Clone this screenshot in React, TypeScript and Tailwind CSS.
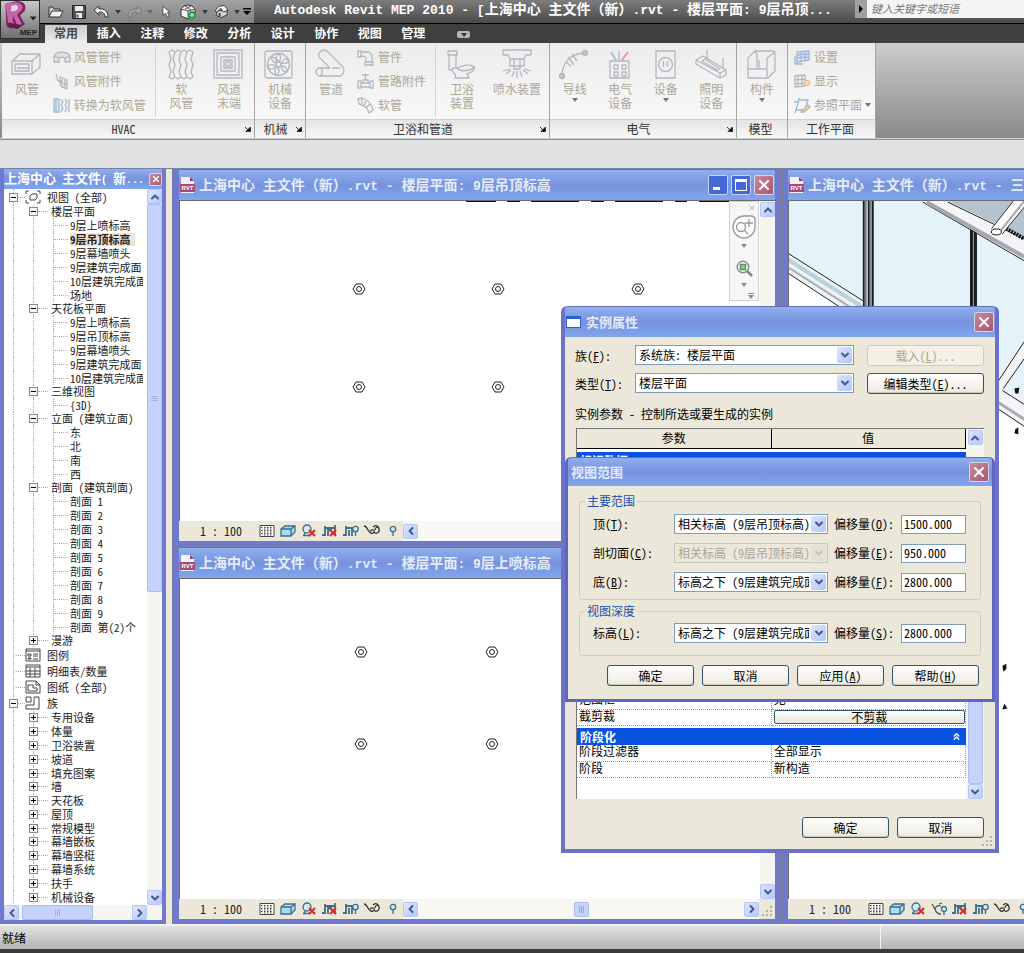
import type { ReactNode } from "react";
import { ChevronDown, ChevronLeft, ChevronRight, ChevronUp, ChevronsUp, X } from "lucide-react";

const FONT = "font-['Noto_Sans_Mono_CJK_SC','Noto_Sans_CJK_SC',sans-serif]";
const TITLE_BG = "bg-linear-to-b from-[#8fb0ee] via-[#7892de] to-[#7fa6ee]";

/* ---------- small shared pieces ---------- */

// Latin runs use the fixed-pitch face, Chinese keeps the UI font
function Mixed({ text, latin }: { text: string; latin: string }) {
  return (
    <>
      {text.split(/([\x20-\x7e]+)/).map((part, i) =>
        i % 2 ? (
          <span key={i} className={`whitespace-pre font-['Liberation_Mono',monospace] ${latin}`}>{part}</span>
        ) : (
          part
        )
      )}
    </>
  );
}

function Caret({ className = "" }: { className?: string }) {
  return (
    <svg viewBox="0 0 6 4" className={`h-[4px] w-[6px] shrink-0 ${className}`}>
      <path d="M0 0h6L3 4z" fill="currentColor" />
    </svg>
  );
}

function ScrollButton({ dir }: { dir: "up" | "down" | "left" | "right" }) {
  const Icon = { up: ChevronUp, down: ChevronDown, left: ChevronLeft, right: ChevronRight }[dir];
  return (
    <button
      type="button"
      aria-label={dir}
      className="flex size-[15px] shrink-0 items-center justify-center rounded-xs border border-[#b4c6f4] bg-linear-to-br from-[#dde6ff] to-[#b6c9fa] text-[#45598c]"
    >
      <Icon size={12} strokeWidth={4} />
    </button>
  );
}

function CloseButton({ small = false }: { small?: boolean }) {
  return (
    <button
      type="button"
      aria-label="关闭"
      className={`flex shrink-0 items-center justify-center rounded-xs border border-[#d9d4ea] bg-linear-to-br from-[#c58a9d] to-[#a9576c] text-white ${small ? "size-[13px]" : "size-[20px]"}`}
    >
      <X size={small ? 10 : 16} strokeWidth={3} />
    </button>
  );
}

function PushButton({ children, className = "w-[87px]", disabled = false }: { children: ReactNode; className?: string; disabled?: boolean }) {
  return (
    <button
      type="button"
      disabled={disabled}
      className={`h-[21px] rounded-[3px] border text-center text-xs leading-[18px] ${
        disabled ? "border-[#cfcdbf] bg-[#f3f1e6] text-[#a8a698]" : "border-[#33566f] bg-linear-to-b from-white to-[#ebeae0] text-black shadow-[inset_0_-1px_1px_#c9c6b8]"
      } ${className}`}
    >
      {children}
    </button>
  );
}

function Combo({ id, value, className, disabled = false }: { id: string; value: string; className: string; disabled?: boolean }) {
  return (
    <div className={`relative h-[20px] ${className}`}>
      <select
        id={id}
        disabled={disabled}
        className={`block size-full appearance-none overflow-hidden border pl-[3px] pr-[18px] text-xs leading-[18px] opacity-100 ${
          disabled ? "border-[#c9c7ba] bg-[#ebe8d9] text-[#a8a698]" : "border-[#7f9db9] bg-white text-black"
        }`}
      >
        <option>{value}</option>
      </select>
      <span
        className={`pointer-events-none absolute right-[2px] top-[2px] flex h-[16px] w-[15px] items-center justify-center rounded-xs ${
          disabled ? "bg-[#e4e1d3] text-[#c6c4b6]" : "bg-linear-to-br from-[#dbe5ff] to-[#b2c6f8] text-[#45598c]"
        }`}
      >
        <ChevronDown size={12} strokeWidth={4} />
      </span>
    </div>
  );
}

function Key({ text, k }: { text: string; k: string }) {
  return (
    <>
      {text}(<u>{k}</u>)
    </>
  );
}

/* ---------- quick access bar, title and tabs ---------- */

function RevitLogo() {
  return (
    <div className="relative h-[39px] w-[40px] shrink-0 border border-[#2b2b2b] bg-linear-to-b from-[#c9c9c9] to-[#6f6f6f]">
      <svg viewBox="0 0 38 38" className="size-full">
        <path d="M4 3l11-3c8 0 11 4 9 10l-5 5 5 9-8 5-5-9v9l-6-3z" fill="#7b2561" />
        <path d="M4 3l10-2c6 0 9 4 7 8l-5 5 5 10-5 1-4-10-1 12-4-3z" fill="#c465a6" />
        <path d="M10 5l4-1c4 0 4 5 0 6l-4 1z" fill="#e9d6e6" />
        <path d="M7 22l14 3-5 4-9-3z" fill="#5d1d4b" />
        <path d="M29 16h7l-3.500 4z" fill="#222" />
      </svg>
      <span className="absolute bottom-0 right-[2px] font-['Liberation_Sans',sans-serif] text-[8px] font-bold leading-[10px] text-[#222]">MEP</span>
    </div>
  );
}

function QuickAccess() {
  const btn = "flex h-[20px] items-center justify-center";
  return (
    <div className="flex h-[23px] w-[214px] shrink-0 items-center bg-linear-to-b from-[#a2a2a2] to-[#828282] pl-[6px] text-[#3a3a3a]">
      <button type="button" aria-label="打开" className={`${btn} w-[20px]`}>
        <svg viewBox="0 0 16 14" className="h-[14px] w-[16px]">
          <path d="M1 12V2h4l1 2h6v2" fill="#c9ced4" stroke="#333" />
          <path d="M1 12l3-6h11l-3 6z" fill="#eef0f2" stroke="#333" />
        </svg>
      </button>
      <button type="button" aria-label="保存" className={`${btn} w-[25px]`}>
        <svg viewBox="0 0 14 14" className="size-[14px]">
          <path d="M.5.5h13v13H.5z" fill="#46525e" stroke="#222" />
          <path d="M3 1h8v5H3zM4 8h6v5H4z" fill="#e9edf0" />
          <path d="M4.500 9.500h2v3h-2z" fill="#46525e" />
        </svg>
      </button>
      <button type="button" aria-label="放弃" className={`${btn} w-[20px]`}>
        <svg viewBox="0 0 16 13" className="h-[13px] w-[16px]">
          <path d="M1 5l5-4v3c6-1 9 3 9 8h-3c0-4-2-5-6-5v3z" fill="#f2f4f6" stroke="#333" />
        </svg>
      </button>
      <Caret className="mx-[4px]" />
      <button type="button" aria-label="重做" className={`${btn} w-[20px]`}>
        <svg viewBox="0 0 16 13" className="h-[13px] w-[16px]">
          <path d="M15 5l-5-4v3C4 3 1 7 1 12h3c0-4 2-5 6-5v3z" fill="#a3a3a3" stroke="#777" />
        </svg>
      </button>
      <Caret className="mx-[2px] text-[#666]" />
      <button type="button" aria-label="选择" className={`${btn} w-[22px]`}>
        <svg viewBox="0 0 10 14" className="h-[13px] w-[9px]">
          <path d="M1 1v10l3-2 2 4 2-1-2-4h3z" fill="#fff" stroke="#444" />
        </svg>
      </button>
      <button type="button" aria-label="三维视图" className={`${btn} w-[22px]`}>
        <svg viewBox="0 0 16 16" className="size-[16px]">
          <path d="M1 5l3-3 4-1 4 1 3 3v6l-7 4-7-3z" fill="#eef3f1" stroke="#333" />
          <path d="M1 5l7 2 7-2M8 7v7M5 2l6 4M11 2L5 5" fill="none" stroke="#555" />
          <circle cx="12" cy="11" r="4" fill="#2f9e4e" />
          <path d="M10 11h4M12 9v4" stroke="#d6f5dc" />
        </svg>
      </button>
      <Caret className="mx-[3px]" />
      <button type="button" aria-label="默认视图" className={`${btn} w-[20px]`}>
        <svg viewBox="0 0 16 15" className="h-[15px] w-[15px]">
          <path d="M3 7v5l5 2 6-3V6z" fill="#cdd3da" stroke="#333" />
          <path d="M1 7l4-5 6-1 4 5-5 2-3-4-4 4z" fill="#f4f6f8" stroke="#333" />
          <path d="M5 9h2v4l-2-1z" fill="#444" />
        </svg>
      </button>
      <Caret className="mx-[3px]" />
      <svg viewBox="0 0 8 7" className="h-[7px] w-[8px] shrink-0">
        <path d="M0 0h8v1.500H0zM0 3h8L4 7z" fill="#000" />
      </svg>
    </div>
  );
}

const tabs = ["插入", "注释", "修改", "分析", "设计", "协作", "视图", "管理"];

function Header() {
  return (
    <header className="flex h-[43px] shrink-0 bg-[#3f3f3f]">
      <RevitLogo />
      <div className="min-w-0 flex-1">
        <div className="flex h-[24px] items-start border-b border-black bg-linear-to-b from-[#7d7d7d] to-[#4a4a4a]">
          <QuickAccess />
          <h1 className="min-w-0 flex-1 whitespace-nowrap pl-[20px] text-[14px] font-bold leading-[16px] text-white">
            <Mixed text="Autodesk Revit MEP 2010 - [上海中心 主文件（新）.rvt - 楼层平面: 9层吊顶..." latin="text-[13px]" />
          </h1>
          <div className="flex h-[18px] w-[169px] shrink-0">
            <button type="button" aria-label="展开搜索" className="flex w-[13px] items-center justify-center bg-[#a0a0a0]">
              <svg viewBox="0 0 4 8" className="h-[8px] w-[4px]">
                <path d="M0 0l4 4-4 4z" />
              </svg>
            </button>
            <input
              aria-label="搜索"
              placeholder="键入关键字或短语"
              className="w-full min-w-0 bg-[#f4f4f4] pb-[2px] pl-[4px] text-[11px] italic leading-[16px] placeholder:text-[#777]"
            />
          </div>
        </div>
        <nav className="flex h-[19px] items-end text-xs font-bold text-white">
          <button type="button" className="ml-[5px] h-[18px] w-[42px] bg-linear-to-b from-[#c9c9c9] to-[#efefef] pb-[3px] leading-[14px] text-[#4a4a4a]">常用</button>
          <div className="grid h-[18px] w-[348px] grid-cols-8">
            {tabs.map((t) => (
              <button key={t} type="button" className="pb-[3px] leading-[14px]">{t}</button>
            ))}
          </div>
          <button type="button" aria-label="最小化功能区" className="mb-[5px] ml-[22px] flex h-[7px] w-[13px] items-center justify-center rounded-xs bg-[#b5b5b5] text-[#333]">
            <Caret />
          </button>
        </nav>
      </div>
    </header>
  );
}

/* ---------- ribbon ---------- */

const big: Record<string, ReactNode> = {
  duct: <path d="M1 12l8-7h20v13l-8 7H1zM1 12h20v13M21 12l8-7M4 15h14v7H4zM6 19h12" />,
  flexDuct: <path d="M4 3l3-2 3 2 3-2 3 2 3-2 3 2 3-2 3 2-2 7 2 6-2 7 2 5-3 2-3-2-3 2-3-2-3 2-3-2-3 2-3-2 2-5-2-7 2-6zM10 3l-2 7 2 6-2 7 2 5M16 3l-2 7 2 6-2 7 2 5M22 3l-2 7 2 6-2 7 2 5" />,
  terminal: <path d="M1 1h28v28H1zM4 4h22v22H4zM8 8h14v14H8zM11 11h8v8h-8zM13 13h4v4h-4z" />,
  fan: (
    <>
      <rect x="1" y="2" width="27" height="27" rx="2" />
      <circle cx="14.500" cy="15.500" r="11" />
      <circle cx="14.500" cy="15.500" r="2.500" />
      <path d="M15 13c-4-3-3-7 0-8 2 2 2 5 0 8zM17 14c2-4 6-5 8-3-1 3-4 4-8 3zM17 17c5 0 7 3 6 6-3 0-5-2-6-6zM14 18c2 4 1 7-2 8-2-3-1-6 2-8zM12 17c-3 4-6 4-8 1 1-3 4-3 8-1zM12 14c-4-1-5-4-4-6 3 0 5 2 4 6z" />
    </>
  ),
  pipe: <path d="M5 3c3-3 6-2 8 0l15 15c2 3 0 9-3 9H5c-5 0-5-8 0-8h10L5 9C3 7 3 5 5 3zM5 19c3 1 3 7 0 8M25 19l-8 0" />,
  toilet: <path d="M2 2h9v4H2zM3 6v15h4M10 6v12M7 19h5c4-3 12-4 17-1-1 3-4 6-8 7l2 4H9c1-2 1-3-1-5-2-1-2-4-1-5zM10 18c4 5 12 5 19 0" />,
  sprinkler: <path d="M2 1h28v5h-5l-2 4H9L7 6H2zM9 10v7h4v-6M23 10v7h-4v-6M13 17h6v3h-6zM10 21l-5 4M13 22l-2 6M16 22v7M19 22l2 6M22 21l5 4M9 20l-7 2M23 20l7 2" />,
  wire: (
    <>
      <circle cx="26" cy="4" r="2.500" fill="#c4c7cc" />
      <circle cx="3" cy="27" r="2.500" fill="#c4c7cc" />
      <path d="M24 4C12 5 4 13 3 25M9 8l6 8M13 5l5 7M7 13l5 4" />
    </>
  ),
  panel: (
    <>
      <path d="M6 12h19v17H6z" />
      <path d="M10 16h4v4h-4zM18 16h4v4h-4zM10 23h4v4h-4zM18 23h4v4h-4zM15 2v9" />
      <path d="M7 3l5 8" stroke="#9fc4dc" strokeWidth="2" />
      <path d="M24 3l-6 8" stroke="#e39a97" strokeWidth="2" />
    </>
  ),
  outlet: (
    <>
      <path d="M6 2h19v27H6z" />
      <circle cx="15.500" cy="15.500" r="7" />
      <path d="M13.500 12v6M17.500 12v6" />
    </>
  ),
  light: <path d="M1 11l7-4 23 14v5l-6 3L1 15zM1 11l24 13 6-3M25 24v5M12 1v9M28 9v10M7 12l3-2 15 10-3 1z" />,
  component: <path d="M2 10q0-2 2-3l5-5h18q2 0 2 2v18l-7 7H2zM29 3l-8 6v9q0 2-2 2H2M11 20V6q0-3-3-3M21 20v8M13 20v-9" />,
};

const small: Record<string, ReactNode> = {
  ductFitting: <path d="M1 7c3-5 13-5 16 0v6h-5V9c-2-1-4-1-6 0v4H1zM1 7l5 2M17 7l-5 2" fill="#e0e2e6" />,
  ductAccessory: <path d="M3 1l2 7h4M7 4l7 3v9l-7-4zM9 6v9M12 7v9M7 9l7 3" />,
  convert: <path d="M1 2h5v13H1zM3 2v13M8 2l2 3-2 3 2 3-2 4M12 2l2 3-2 3 2 3-2 4M16 2v13" stroke="#9fbbd4" fill="#dbe8f2" />,
  elbow: <path d="M1 2h3v6H1zM4 3h6c4 0 5 3 5 6v4h-6v-3c0-2-1-3-5-3M8 13h8v3H8z" />,
  valve: <path d="M1 8h3v7H1zM13 8h3v7h-3zM4 10h9v4H4zM6 10V7h5v3M8.500 7V2M5 2h7" />,
  flexPipe: <path d="M1 2l4-1c6 2 10 7 11 12l-4 3C11 10 6 8 2 7zM5 1v6M9 4L7 9M13 7l-4 4" />,
  setGrid: <path d="M4 3l12-1v9L4 13zM4 6l12-1M4 9l12-1M8 3v9M12 3v9M2 7v8h8" stroke="#9fb8d6" fill="#d5e4f4" />,
  showGrid: (
    <>
      <path d="M2 3l10-1v11L2 14zM2 7l10-1M2 11l10-1M5 3v11M9 2v11" />
      <circle cx="14" cy="10" r="2.500" fill="#f5e2b4" stroke="#dcc68e" />
    </>
  ),
  refPlane: (
    <>
      <path d="M2 16L6 3h9l-3 10H3M1 5h5M6 3V1" stroke="#92bbdc" />
      <path d="M8 15l7-7 2 2-6 5z" fill="#efe3c4" stroke="#c0b48f" />
    </>
  ),
};

const iconProps = { fill: "none", stroke: "#b3b7be", strokeWidth: 1.3, strokeLinejoin: "round" as const };

function BigButton({ icon, lines, width = "w-[46px]", caret = false }: { icon: string; lines: string[]; width?: string; caret?: boolean }) {
  return (
    <button type="button" className={`flex flex-col items-center pt-[6px] ${width}`}>
      <svg viewBox="0 0 32 31" className="h-[31px] w-[32px]" {...iconProps}>{big[icon]}</svg>
      <span className="mt-[2px] text-xs leading-[14px]">
        {lines.map((l) => (
          <span key={l} className="block">{l}</span>
        ))}
      </span>
      {caret && <Caret className="mt-[2px] text-[#777]" />}
    </button>
  );
}

function SmallColumn({ items, className = "" }: { items: [string, string, boolean?][]; className?: string }) {
  return (
    <div className={`flex flex-col gap-[6px] pt-[5px] ${className}`}>
      {items.map(([icon, label, caret]) => (
        <button key={label} type="button" className="flex h-[18px] items-center gap-[3px] whitespace-nowrap text-xs leading-[16px]">
          <svg viewBox="0 0 18 17" className="h-[17px] w-[18px] shrink-0" {...iconProps}>{small[icon]}</svg>
          {label}
          {caret && <Caret className="text-[#777]" />}
        </button>
      ))}
    </div>
  );
}

function Panel({ title, width, launcher = false, children }: { title: string; width: string; launcher?: boolean; children: ReactNode }) {
  return (
    <section className={`flex shrink-0 flex-col border-r border-[#a5a5a5] bg-linear-to-b from-[#ececec] to-[#fbfbfb] ${width}`}>
      <div className="flex h-[76px] px-[2px] text-[#aba89b]">{children}</div>
      <div className="flex h-[19px] items-center border-t border-[#d2d2d2] bg-linear-to-b from-[#e4e4e4] to-[#f8f8f8] pr-[3px]">
        <h2 className="flex-1 text-center text-xs leading-[16px] text-[#333]">{title}</h2>
        {launcher && (
          <svg viewBox="0 0 6 6" className="size-[6px]">
            <path d="M0 1l3 3M5.500 1v4.500H1z" stroke="#333" />
          </svg>
        )}
      </div>
    </section>
  );
}

function Divider() {
  return <div className="my-[2px] w-px bg-[#d3d3d3]" />;
}

function Ribbon() {
  return (
    <div className="shrink-0 border-b border-[#8f8f8f] bg-[#cfcfcf] pb-[1px]">
      <div className="flex h-[95px] bg-linear-to-b from-[#cdcdcd] to-[#8a8a8a] pl-[2px]">
        <Panel title="HVAC" width="w-[253px]" launcher>
          <BigButton icon="duct" lines={["风管"]} />
          <SmallColumn
            className="w-[106px] pl-[3px]"
            items={[["ductFitting", "风管管件"], ["ductAccessory", "风管附件"], ["convert", "转换为软风管"]]}
          />
          <Divider />
          <BigButton icon="flexDuct" lines={["软", "风管"]} width="w-[50px]" />
          <BigButton icon="terminal" lines={["风道", "末端"]} />
        </Panel>
        <Panel title="机械" width="w-[51px]" launcher>
          <BigButton icon="fan" lines={["机械", "设备"]} />
        </Panel>
        <Panel title="卫浴和管道" width="w-[244px]" launcher>
          <BigButton icon="pipe" lines={["管道"]} />
          <SmallColumn className="w-[81px] pl-[3px]" items={[["elbow", "管件"], ["valve", "管路附件"], ["flexPipe", "软管"]]} />
          <Divider />
          <BigButton icon="toilet" lines={["卫浴", "装置"]} width="w-[52px]" />
          <BigButton icon="sprinkler" lines={["喷水装置"]} width="w-[58px]" />
        </Panel>
        <Panel title="电气" width="w-[187px]" launcher>
          <BigButton icon="wire" lines={["导线"]} caret />
          <BigButton icon="panel" lines={["电气", "设备"]} />
          <BigButton icon="outlet" lines={["设备"]} caret />
          <BigButton icon="light" lines={["照明", "设备"]} />
        </Panel>
        <Panel title="模型" width="w-[51px]">
          <BigButton icon="component" lines={["构件"]} caret />
        </Panel>
        <Panel title="工作平面" width="w-[88px]">
          <SmallColumn className="pl-[3px]" items={[["setGrid", "设置"], ["showGrid", "显示"], ["refPlane", "参照平面", true]]} />
        </Panel>
      </div>
    </div>
  );
}

/* ---------- project browser ---------- */

type Branch = { name: string; open: boolean; children: string[] };

const views: Branch[] = [
  { name: "楼层平面", open: true, children: ["9层上喷标高", "9层吊顶标高", "9层幕墙喷头", "9层建筑完成面", "10层建筑完成面", "场地"] },
  { name: "天花板平面", open: true, children: ["9层上喷标高", "9层吊顶标高", "9层幕墙喷头", "9层建筑完成面", "10层建筑完成面"] },
  { name: "三维视图", open: true, children: ["{3D}"] },
  { name: "立面 (建筑立面)", open: true, children: ["东", "北", "南", "西"] },
  {
    name: "剖面 (建筑剖面)",
    open: true,
    children: ["剖面 1", "剖面 2", "剖面 3", "剖面 4", "剖面 5", "剖面 6", "剖面 7", "剖面 8", "剖面 9", "剖面 第(2)个"],
  },
  { name: "漫游", open: false, children: [] },
];

const families = [
  "专用设备", "体量", "卫浴装置", "坡道", "填充图案", "墙", "天花板",
  "屋顶", "常规模型", "幕墙嵌板", "幕墙竖梃", "幕墙系统", "扶手", "机械设备",
];

const rootIcons: Record<string, ReactNode> = {
  views: <path d="M4 1H1v3M12 1h3v3M4 13H1v-3M12 13h3v-3M5 6l2-2h5v4l-2 2H5z" />,
  legend: <path d="M1 1h14v12H1zM1 3h14M3 6h3v2H3zM8 6h5M8 8h5M3 10h3v1H3zM8 11h5" />,
  schedule: <path d="M1 1h14v12H1zM1 3h14M1 7h14M1 10h14M5 4v9M10 4v9" />,
  sheet: <path d="M1 1h10l4 4v8H1zM11 1v4h4M3 11V5h5v3h4v3z" />,
  family: <path d="M1 1h5v5H1zM9 1h5v12H1V9h8z" />,
};

function Toggle({ open }: { open: boolean }) {
  return (
    <span className="relative -ml-[5px] flex size-[9px] shrink-0 items-center justify-center self-center border border-[#8a8a8a] bg-[#f6f6f4]">
      <span className="h-px w-[5px] bg-black" />
      {!open && <span className="absolute h-[5px] w-px bg-black" />}
    </span>
  );
}

function Guide() {
  return <span className="w-[20px] shrink-0 self-stretch border-l border-dotted border-[#b0b0b0]" />;
}

function RootRow({ icon, name, open }: { icon: string; name: string; open?: boolean }) {
  return (
    <div className="flex h-[16px] items-center">
      <span className="flex w-[12px] shrink-0 items-center self-stretch border-l border-dotted border-[#b0b0b0]">
        {open ? <Toggle open /> : null}
        <span className="flex-1 border-t border-dotted border-[#b0b0b0]" />
      </span>
      <svg viewBox="0 0 16 14" className="mr-[6px] h-[14px] w-[16px] shrink-0" fill="none" stroke="#444">{rootIcons[icon]}</svg>
      {name}
    </div>
  );
}

function BranchRow({ name, open, className = "" }: { name: string; open: boolean; className?: string }) {
  return (
    <div className={`flex items-center ${className}`}>
      <Guide />
      <span className="flex w-[18px] shrink-0 items-center self-stretch border-l border-dotted border-[#b0b0b0]">
        <Toggle open={open} />
        <span className="w-[10px] border-t border-dotted border-[#b0b0b0]" />
      </span>
      {name}
    </div>
  );
}

function ProjectBrowser() {
  return (
    <aside className="flex w-[166px] shrink-0 flex-col border-x-4 border-b-4 border-[#7079ce] bg-white">
      <div className={`flex h-[20px] shrink-0 items-center ${TITLE_BG}`}>
        <h2 className="min-w-0 flex-1 whitespace-nowrap text-[13px] font-bold leading-[20px] text-white">
          <Mixed text="上海中心 主文件( 新..." latin="text-[10px]" />
        </h2>
        <CloseButton small />
      </div>
      <div className="flex min-h-0 flex-1">
        <div className="mr-[4px] min-w-0 flex-1 overflow-hidden whitespace-pre pl-[9px] text-[11px] leading-[13px] text-[#222]">
          <RootRow icon="views" name="视图 (全部)" open />
          {views.map((v) => (
            <div key={v.name}>
              <BranchRow name={v.name} open={v.open} className="h-[13px]" />
              {v.children.map((c) => (
                <div key={c} className="flex h-[14px] items-center">
                  <Guide />
                  <Guide />
                  <span className="flex w-[17px] shrink-0 items-center self-stretch border-l border-dotted border-[#b0b0b0]">
                    <span className="w-[14px] border-t border-dotted border-[#b0b0b0]" />
                  </span>
                  <span className={v.name === "楼层平面" && c === "9层吊顶标高" ? "bg-[#ece5d6] pr-[4px] font-bold" : ""}>{c}</span>
                </div>
              ))}
            </div>
          ))}
          <RootRow icon="legend" name="图例" />
          <RootRow icon="schedule" name="明细表/数量" />
          <RootRow icon="sheet" name="图纸 (全部)" />
          <RootRow icon="family" name="族" open />
          <div className="grid h-[193px] auto-rows-fr">
            {families.map((f) => (
              <BranchRow key={f} name={f} open={false} />
            ))}
          </div>
        </div>
        <div className="flex w-[15px] shrink-0 flex-col bg-[#f6f5f0]">
          <ScrollButton dir="up" />
          <div className="flex h-[388px] flex-col items-center justify-center gap-px rounded-xs border border-[#a9bdf0] bg-[#c5d4fc]">
            <span className="h-px w-[7px] bg-[#9db3ea]" />
            <span className="h-px w-[7px] bg-[#9db3ea]" />
            <span className="h-px w-[7px] bg-[#9db3ea]" />
          </div>
          <div className="flex-1" />
          <ScrollButton dir="down" />
        </div>
      </div>
      <div className="flex h-[15px] shrink-0 bg-[#f6f5f0] pr-[15px]">
        <ScrollButton dir="left" />
        <div className="ml-[3px] flex w-[71px] items-center justify-center gap-px rounded-xs border border-[#a9bdf0] bg-[#c5d4fc]">
          <span className="h-[7px] w-px bg-[#9db3ea]" />
          <span className="h-[7px] w-px bg-[#9db3ea]" />
          <span className="h-[7px] w-px bg-[#9db3ea]" />
        </div>
        <div className="flex-1" />
        <ScrollButton dir="right" />
      </div>
    </aside>
  );
}

/* ---------- drawing windows ---------- */

function RvtIcon() {
  return (
    <span className="relative h-[16px] w-[15px] shrink-0">
      <svg viewBox="0 0 15 16" className="size-full">
        <path d="M1 0h9l4 4v12H1z" fill="#f6f1f6" />
        <path d="M10 0l4 4h-4z" fill="#8f3b7b" />
        <path d="M0 7h15v8H0z" fill="#a84a78" />
      </svg>
      <span className="absolute inset-x-0 bottom-[1px] text-center font-['Liberation_Sans',sans-serif] text-[6px] font-bold leading-[8px] text-white">RVT</span>
    </span>
  );
}

const red = { stroke: "#d0322b", strokeWidth: 2.2 };

function ViewBar({ render = false, children }: { render?: boolean; children?: ReactNode }) {
  const cell = "flex w-[21px] shrink-0 justify-center";
  const svg = { viewBox: "0 0 16 14", className: "h-[14px] w-[16px]", fill: "none", stroke: "#3f6d8e", strokeWidth: 1.3 };
  return (
    <div className="flex h-[20px] shrink-0 items-center bg-[#ebe8d9]">
      <span className="w-[77px] shrink-0 whitespace-pre pl-[21px] text-xs leading-[16px] text-[#222]">1 : 100</span>
      <button type="button" aria-label="详细程度" className={cell}>
        <svg {...svg} stroke="#444" strokeWidth="1">
          <path d="M1 1.500h14v11H1z" fill="#fff" />
          <path d="M2 3.500h12M2 6.500h12M2 9.500h12" strokeDasharray="1.500 1.500" />
          <path d="M3 5h11M3 8h11M3 11h11" strokeDasharray="1.500 1.500" strokeDashoffset="1" />
        </svg>
      </button>
      <button type="button" aria-label="模型图形样式" className={cell}>
        <svg {...svg}>
          <path d="M1 5l4-3h10v6l-4 4H1z" fill="#a9dcf2" />
          <path d="M1 5h10v7M11 5l4-3" />
        </svg>
      </button>
      <button type="button" aria-label="阴影" className={cell}>
        <svg {...svg}>
          <circle cx="6" cy="5" r="4" fill="#d7eef8" />
          <path d="M2 11.500h7M4 9l-1 2" />
          <path d="M8 6l6 6M14 6l-6 6" {...red} />
        </svg>
      </button>
      {render && (
        <button type="button" aria-label="渲染" className={cell}>
          <svg {...svg}>
            <path d="M1 2l3 5c1 4 3 5 6 5M4 7c1-3 3-4 6-3M8 2l3-1" stroke="#555" />
            <circle cx="13" cy="7" r="2.500" fill="#d7eef8" />
            <path d="M13 10v3" />
          </svg>
        </button>
      )}
      <button type="button" aria-label="裁剪视图" className={cell}>
        <svg {...svg}>
          <path d="M0 11h3V4h10v8M3 4V2M6 12V6h4M13 4V1" strokeWidth="1.800" />
          <path d="M8 6l6 6M14 6l-6 6" {...red} />
        </svg>
      </button>
      <button type="button" aria-label="显示裁剪区域" className={cell}>
        <svg {...svg}>
          <path d="M0 11h3V4h6v8M3 4V2M6 12V6" strokeWidth="1.800" />
          <circle cx="12.500" cy="5" r="2.700" fill="#d7eef8" />
          <path d="M12.500 8v4" />
        </svg>
      </button>
      <button type="button" aria-label="临时隐藏/隔离" className={cell}>
        <svg {...svg} stroke="#333">
          <path d="M0 2c2 0 3 2 4 4s4 5 6 2c1-2-2-3-4-1M10 8c2 3 6 0 5-3s-4-2-4 1M9 3c2-2 4-2 6 1" />
        </svg>
      </button>
      <button type="button" aria-label="显示隐藏的图元" className={cell}>
        <svg {...svg}>
          <circle cx="8" cy="5" r="2.700" fill="#c9eaf8" />
          <path d="M8 8v4" />
        </svg>
      </button>
      {children}
    </div>
  );
}

function Hexes({ points }: { points: [number, number][] }) {
  return (
    <>
      {points.map(([x, y]) => (
        <g key={`${x}-${y}`} transform={`translate(${x} ${y})`} fill="none" stroke="#222">
          <path d="M-6 0l3-5h6l3 5-3 5h-6z" />
          <circle r="2.500" />
        </g>
      ))}
    </>
  );
}

function ViewWindow({ title, active = false, children, className = "" }: { title: string; active?: boolean; children: ReactNode; className?: string }) {
  return (
    <section className={`flex min-h-0 flex-col rounded-t-md border-x-[5px] border-b-[5px] border-[#7079ce] bg-[#7079ce] ${className}`}>
      <div className={`flex h-[31px] shrink-0 items-center border-t border-[#666fb8] pl-[1px] pr-[1px] ${TITLE_BG}`}>
        <RvtIcon />
        <h2 className="ml-[4px] min-w-0 flex-1 overflow-hidden whitespace-nowrap text-[14px] font-bold leading-[20px] text-[#e4ecfc]">
          <Mixed text={title} latin="text-[13px]" />
        </h2>
        {active && (
          <div className="flex gap-[3px]">
            <button type="button" aria-label="最小化" className="flex size-[20px] items-end rounded-xs border border-[#c5d2f5] bg-[#4468d8] p-[4px]">
              <span className="h-[3px] w-[7px] bg-white" />
            </button>
            <button type="button" aria-label="最大化" className="size-[20px] rounded-xs border border-[#c5d2f5] bg-[#4468d8] p-[3px]">
              <span className="block size-full border border-t-[3px] border-white" />
            </button>
            <CloseButton />
          </div>
        )}
      </div>
      {children}
    </section>
  );
}

function NavBar() {
  return (
    <div className="absolute right-[16px] top-0 flex h-[100px] w-[30px] flex-col items-center border border-[#d0d0d0] bg-[#f6f6f6] text-[#8c8c8c]">
      <X size={8} strokeWidth={2} className="mt-[2px] mr-[2px] self-end" />
      <svg viewBox="0 0 24 24" className="mt-[3px] size-[24px]" fill="none" stroke="#999" strokeWidth="1.300">
        <path d="M12 1h7q4 0 4 4v7a11 11 0 1 1-11-11z" fill="#fdfdfd" />
        <circle cx="9" cy="12" r="4.500" />
        <path d="M12 15l4 4M17 4v8M13 8h8" />
      </svg>
      <Caret className="mt-[5px]" />
      <svg viewBox="0 0 17 17" className="mt-[12px] size-[17px]" fill="none" stroke="#888" strokeWidth="1.400">
        <circle cx="7" cy="7" r="5.800" />
        <path d="M4.500 4.500h5v5h-5z" fill="#8fcf8d" stroke="#4c9a55" />
        <path d="M11 11l5 5" strokeWidth="2.500" />
      </svg>
      <Caret className="mt-[6px]" />
      <svg viewBox="0 0 6 6" className="mt-[6px] mr-[4px] size-[6px] self-end" fill="currentColor">
        <path d="M0 0h6v1H0zM0 2h6L3 6z" />
      </svg>
    </div>
  );
}

function ModelView() {
  return (
    <svg viewBox="0 0 236 700" preserveAspectRatio="xMinYMin slice" className="min-h-0 w-full flex-1 border-l border-t border-[#6b6b6b] bg-white">
      <path d="M0 0h236v220L70 115 0 73z" fill="#e4f2f9" />
      <path d="M0 73l75 48v100H0z" fill="#fff" />
      {/* mullions */}
      <path d="M75 0v140M80 0v140M84 0v140" stroke="#1c1f22" strokeWidth="2" />
      <path d="M77 0v140M82 0v140" stroke="#7d878d" strokeWidth="2" />
      <path d="M183 20v120M187 25v115" stroke="#1c1f22" strokeWidth="3" />
      <path d="M185 20v120" stroke="#8a949a" />
      {/* lower left pipe */}
      <path d="M0 53l74 47v20L0 73z" fill="#eef3f6" />
      <path d="M0 57l74 47v5L0 62z" fill="#b9d2de" />
      <path d="M0 53l74 47M0 73l52 34" stroke="#222" />
      <path d="M0 67l70 45" stroke="#a9adb3" strokeWidth="2" />
      {/* upper right pipes */}
      <path d="M159 0h77v37z" fill="#b4c3cd" />
      <path d="M134 0h25l77 37v23z" fill="#f4f4f6" />
      <path d="M134 1l102 59M159 1l77 37" stroke="#222" fill="none" />
      <path d="M138 1l98 55" stroke="#a7a7b0" strokeWidth="4" />
      <path d="M215 26l21 12" stroke="#111" strokeWidth="4" strokeDasharray="2 1" />
      <path d="M225 0l-22 28c-2 5 8 9 11 5L236 6V0z" fill="#fafafa" />
      <path d="M225 0l-22 28M236 6l-22 27" stroke="#333" />
      <path d="M236 0l-24 30" stroke="#aaa" strokeWidth="2" />
      <ellipse cx="208" cy="31" rx="5" ry="3" fill="#fff" stroke="#111" />
      {/* right edge frame */}
      <path d="M205 183l31-42v15l-22 30 22 14v28l-31-20z" fill="#f2f4f6" />
      <path d="M205 188l31-47M215 188l21-30M214 190l22 14M206 206l30 20" stroke="#222" fill="none" />
      <path d="M207 200l29 19" stroke="#a9adb3" strokeWidth="3" />
      <g fill="#111">
        <path d="M226 188l5-1-1 6h-3zM227 229l3-2v7l-4-1zM214 466l4-2v5l-3 3zM216 504l3 5-5 1z" />
      </g>
    </svg>
  );
}

function Grip() {
  return (
    <svg viewBox="0 0 12 12" className="m-[2px] size-[12px] shrink-0 self-end">
      <path d="M9 1h2v2H9zM5 5h2v2H5zM9 5h2v2H9zM1 9h2v2H1zM5 9h2v2H5zM9 9h2v2H9z" fill="#b5b19f" />
    </svg>
  );
}

function Workspace() {
  const canvas = "relative flex min-h-0 flex-1 border-l border-t border-[#6b6b6b] bg-white";
  return (
    <div className="flex min-w-0 flex-1 gap-[3px] bg-[#777fa8]">
      <div className="flex min-w-0 flex-1 flex-col gap-px">
        <ViewWindow title="上海中心 主文件（新）.rvt - 楼层平面: 9层吊顶标高" active className="flex-1">
          <div className={canvas}>
            <svg className="min-w-0 flex-1">
              <path
                d="M286 0h30M327 0h13M351 0h48M411 0h13M435 0h48M495 0h12M519 0h48"
                stroke="#111"
                strokeWidth="2"
              />
              <Hexes points={[[179, 88], [318, 88], [458, 88], [179, 186], [318, 186]]} />
            </svg>
            <NavBar />
            <div className="flex w-[15px] flex-col bg-[#f6f5f0] pt-[1px]">
              <ScrollButton dir="up" />
            </div>
          </div>
          <ViewBar>
            <div className="flex h-full flex-1 items-center bg-[#f8f7f3]">
              <ScrollButton dir="left" />
            </div>
          </ViewBar>
        </ViewWindow>
        <ViewWindow title="上海中心 主文件（新）.rvt - 楼层平面: 9层上喷标高" className="flex-1">
          <div className={canvas}>
            <svg className="min-w-0 flex-1">
              <Hexes points={[[181, 73], [312, 73], [181, 165], [312, 165]]} />
            </svg>
            <div className="flex w-[15px] flex-col justify-end bg-[#f6f5f0]">
              <ScrollButton dir="down" />
            </div>
          </div>
          <ViewBar>
            <div className="flex h-full flex-1 items-center justify-between bg-[#f8f7f3]">
              <ScrollButton dir="left" />
              <span className="flex size-[15px] items-center justify-center gap-px rounded-xs border border-[#a9bdf0] bg-[#c5d4fc]">
                <span className="h-[7px] w-px bg-[#8fa6e0]" />
                <span className="h-[7px] w-px bg-[#8fa6e0]" />
                <span className="h-[7px] w-px bg-[#8fa6e0]" />
              </span>
              <ScrollButton dir="right" />
            </div>
            <Grip />
          </ViewBar>
        </ViewWindow>
      </div>
      <ViewWindow title="上海中心 主文件（新）.rvt - 三维视图" className="w-[246px] shrink-0 -mr-[5px]">
        <ModelView />
        <ViewBar render />
      </ViewWindow>
    </div>
  );
}

/* ---------- dialogs ---------- */

function GroupRow({ title }: { title: string }) {
  return (
    <tr className="bg-[#0a52e0] text-white">
      <th scope="colgroup" colSpan={2} className="h-[17px] pl-[3px] pr-[4px] text-left font-bold">
        <span className="flex items-center justify-between">
          {title}
          <ChevronsUp size={11} strokeWidth={3} />
        </span>
      </th>
    </tr>
  );
}

function PropertiesDialog() {
  const cell = "h-[16px] border-b border-r border-dotted border-[#999] pl-[2px] align-top leading-[12px]";
  return (
    <section
      role="dialog"
      aria-label="实例属性"
      className="absolute left-[561px] top-[306px] flex h-[547px] w-[438px] flex-col rounded-t-md border-x-4 border-b-4 border-[#6a72ca] bg-[#ebe8d9] text-xs leading-[14px] text-black"
    >
      <div className={`flex h-[31px] shrink-0 items-center rounded-t-sm border-t border-[#666fb8] px-[1px] ${TITLE_BG}`}>
        <span className="h-[12px] w-[15px] border border-t-[3px] border-[#2d62d0] bg-white" />
        <h2 className="ml-[5px] flex-1 text-[13px] font-bold text-[#e4ecfc]">实例属性</h2>
        <CloseButton />
      </div>
      <div className="flex flex-1 flex-col pl-[10px] pr-[11px] pt-[8px]">
        <div className="grid grid-cols-[60px_219px_1fr] gap-y-[7px]">
          <label htmlFor="family" className="self-center"><Key text="族" k="F" />:</label>
          <Combo id="family" value="系统族: 楼层平面" className="w-full" />
          <PushButton disabled className="ml-[13px]"><Key text="载入" k="L" />...</PushButton>
          <label htmlFor="type" className="self-center"><Key text="类型" k="T" />:</label>
          <Combo id="type" value="楼层平面" className="w-full" />
          <PushButton className="ml-[13px]"><Key text="编辑类型" k="E" />...</PushButton>
        </div>
        <p className="mt-[13px]">实例参数 - 控制所选或要生成的实例</p>
        <div className="ml-[1px] mt-[7px] flex h-[371px] border-l border-t border-[#777] bg-white">
          <div className="min-w-0 flex-1">
            <table className="w-full table-fixed border-collapse">
              <thead className="bg-[#ebe8d9]">
                <tr>
                  <th scope="col" className="h-[19px] border-b border-r border-black font-normal">参数</th>
                  <th scope="col" className="border-b border-r border-black font-normal">值</th>
                </tr>
              </thead>
              <tbody>
                <tr className="h-[4px]"><td colSpan={2} /></tr>
                <GroupRow title="标识数据" />
                <tr className="h-[224px]"><td colSpan={2} /></tr>
                <tr>
                  <td className={cell}>范围框</td>
                  <td className={cell}>无</td>
                </tr>
                <tr>
                  <td className={cell}>截剪裁</td>
                  <td className={cell}>
                    <button type="button" className="block h-[14px] w-full rounded-xs border border-[#33566f] bg-linear-to-b from-white to-[#e6e4d8] leading-[12px]">不剪裁</button>
                  </td>
                </tr>
                <tr className="h-[3px]"><td colSpan={2} /></tr>
                <GroupRow title="阶段化" />
                <tr>
                  <td className={cell}>阶段过滤器</td>
                  <td className={cell}>全部显示</td>
                </tr>
                <tr>
                  <td className={cell}>阶段</td>
                  <td className={cell}>新构造</td>
                </tr>
              </tbody>
            </table>
          </div>
          <div className="flex w-[18px] flex-col items-center bg-[#f6f5f0] pt-[1px]">
            <ScrollButton dir="up" />
            <div className="min-h-0 flex-1" />
            <div className="h-[90px] w-[15px] rounded-xs border border-[#a9bdf0] bg-[#c5d4fc]" />
            <ScrollButton dir="down" />
          </div>
        </div>
        <div className="mt-[18px] flex justify-end gap-[8px]">
          <PushButton>确定</PushButton>
          <PushButton>取消</PushButton>
        </div>
      </div>
      <div className="absolute bottom-0 right-0"><Grip /></div>
    </section>
  );
}

type LevelRow = { id: string; label: string; k: string; level: string; offsetKey: string; offset: string; disabled?: boolean };

const mainRange: LevelRow[] = [
  { id: "top", label: "顶", k: "T", level: "相关标高 (9层吊顶标高)", offsetKey: "O", offset: "1500.000" },
  { id: "cut", label: "剖切面", k: "C", level: "相关标高 (9层吊顶标高)", offsetKey: "E", offset: "950.000", disabled: true },
  { id: "bottom", label: "底", k: "B", level: "标高之下 (9层建筑完成面)", offsetKey: "F", offset: "2800.000" },
];
const viewDepth: LevelRow[] = [
  { id: "depth", label: "标高", k: "L", level: "标高之下 (9层建筑完成面)", offsetKey: "S", offset: "2800.000" },
];

function RangeGroup({ legend, rows, className }: { legend: string; rows: LevelRow[]; className: string }) {
  return (
    <fieldset className={`rounded-[3px] border border-[#d0cfbf] pl-[13px] ${className}`}>
      <legend className="-ml-[8px] px-[2px] leading-[16px] text-[#1a4fae]">{legend}</legend>
      <div className="flex flex-col gap-[9px]">
        {rows.map((r) => (
          <div key={r.id} className="flex items-center">
            <label htmlFor={r.id} className="w-[81px]"><Key text={r.label} k={r.k} />:</label>
            <Combo id={r.id} value={r.level} disabled={r.disabled} className="w-[154px]" />
            <label htmlFor={`${r.id}-offset`} className="w-[73px] whitespace-nowrap pl-[6px]"><Key text="偏移量" k={r.offsetKey} />:</label>
            <input id={`${r.id}-offset`} defaultValue={r.offset} className="h-[19px] w-[65px] border border-[#7f9db9] bg-white pb-[2px] pl-[2px]" />
          </div>
        ))}
      </div>
    </fieldset>
  );
}

function ViewRangeDialog() {
  return (
    <section
      role="dialog"
      aria-label="视图范围"
      className="absolute left-[565px] top-[457px] flex h-[245px] w-[430px] flex-col rounded-t-md border-x-[3px] border-b-[3px] border-[#5f66c2] bg-[#ebe8d9] text-xs leading-[14px] text-black"
    >
      <div className={`flex h-[29px] shrink-0 items-center rounded-t-sm border-t border-[#666fb8] px-[3px] ${TITLE_BG}`}>
        <h2 className="flex-1 text-[13px] font-bold text-[#e4ecfc]">视图范围</h2>
        <CloseButton />
      </div>
      <div className="px-[11px] pt-[7px]">
        <RangeGroup legend="主要范围" rows={mainRange} className="pb-[7px] pt-[5px]" />
        <RangeGroup legend="视图深度" rows={viewDepth} className="mt-[3px] pb-[12px] pt-[4px]" />
        <div className="mt-[9px] flex justify-end gap-[8px] pr-[2px]">
          <PushButton>确定</PushButton>
          <PushButton>取消</PushButton>
          <PushButton><Key text="应用" k="A" /></PushButton>
          <PushButton><Key text="帮助" k="H" /></PushButton>
        </div>
      </div>
    </section>
  );
}

export default function App() {
  return (
    <div className={`relative flex h-screen flex-col overflow-hidden bg-[#e0e1e2] ${FONT}`}>
      <Header />
      <Ribbon />
      <div className="h-[28px] shrink-0 bg-[#e0e1e2]" />
      <main className="flex min-h-0 flex-1 border-t border-[#7282a6]">
        <ProjectBrowser />
        <div className="w-[8px] shrink-0 border-r-2 border-[#777fa8] bg-[#ebe8d9]" />
        <Workspace />
      </main>
      <footer className="flex h-[29px] shrink-0 border-b-4 border-t-2 border-b-[#3a3a3a] border-t-[#f2f2f2] bg-linear-to-b from-[#e2e2e2] to-[#b4b4b4]">
        <span className="flex-1 pl-[2px] text-xs leading-[23px] text-black">就绪</span>
        <span className="w-[144px] border-l border-[#f4f4f4]" />
      </footer>
      <PropertiesDialog />
      <ViewRangeDialog />
    </div>
  );
}
